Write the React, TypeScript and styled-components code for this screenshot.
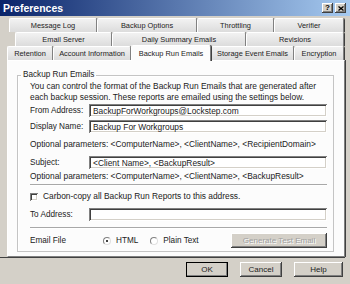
import React from "react";
import styled, { createGlobalStyle } from "styled-components";

const GlobalStyle = createGlobalStyle`
  html, body {
    margin: 0;
    padding: 0;
    background: #d4d0c8;
  }
  body {
    width: 350px;
    height: 284px;
    overflow: hidden;
    font-family: "Liberation Sans", Arial, sans-serif;
  }
`;

const raised = `
  box-shadow: inset -1px -1px #404040, inset 1px 1px #ffffff,
    inset -2px -2px #808080, inset 2px 2px #d4d0c8;
`;

const sunken = `
  box-shadow: inset 1px 1px #808080, inset -1px -1px #ffffff,
    inset 2px 2px #404040, inset -2px -2px #d4d0c8;
`;

const Window = styled.div`
  width: 350px;
  height: 284px;
  box-sizing: border-box;
  background: #d4d0c8;
  display: flex;
  flex-direction: column;
  font-family: "Liberation Sans", Arial, sans-serif;
  font-size: 8.2px;
  color: #222;
  overflow: hidden;
`;

const TitleBar = styled.div`
  height: 16px;
  flex: none;
  display: flex;
  align-items: center;
  padding: 0 4px 0 3px;
  background: linear-gradient(to right, #0a246a, #a6caf0);
`;

const Title = styled.span`
  flex: 1;
  color: #fff;
  font-weight: bold;
  font-size: 10.5px;
`;

const CaptionButton = styled.div`
  width: 11px;
  height: 10px;
  margin-left: 2px;
  background: #d4d0c8;
  ${raised}
  display: flex;
  align-items: center;
  justify-content: center;
  font-weight: bold;
  font-size: 8px;
  line-height: 10px;
  color: #000;
`;

const Sheet = styled.div`
  width: 345px;
  box-sizing: border-box;
  padding: 2px 0 0 7px;
  display: flex;
  flex-direction: column;
  border-bottom: 1px solid #404040;
`;

const TabStrip = styled.div`
  display: flex;
  flex-direction: column;
  position: relative;
  z-index: 1;
`;

const TabRow = styled.div<{ $offset: number }>`
  display: flex;
  height: 14px;
  margin-left: ${(p) => p.$offset}px;
  align-items: flex-end;
`;

const Tab = styled.div<{ $w: number; $active?: boolean }>`
  width: ${(p) => p.$w}px;
  height: ${(p) => (p.$active ? 16 : 14)}px;
  margin-bottom: ${(p) => (p.$active ? -1 : 0)}px;
  box-sizing: border-box;
  display: flex;
  align-items: center;
  justify-content: center;
  font-size: 7.4px;
  white-space: nowrap;
  border-radius: 2px 2px 0 0;
  border-top: 1px solid #fff;
  border-left: 1px solid #fff;
  border-right: 1px solid #808080;
  box-shadow: 1px 0 0 #404040;
  background: ${(p) =>
    p.$active ? "#fcfcfc" : "linear-gradient(#f2f2f2, #dcdcdc)"};
  position: relative;
  z-index: ${(p) => (p.$active ? 2 : 0)};
`;

const Panel = styled.div`
  height: 197px;
  box-sizing: border-box;
  background: #fcfcfc;
  border-left: 1px solid #fff;
  border-top: 1px solid #fff;
  border-right: 1px solid #808080;
  border-bottom: 1px solid #808080;
  box-shadow: 1px 0 0 #404040;
  padding: 0 10px 0 9px;
  display: flex;
  flex-direction: column;
`;

const GroupBox = styled.fieldset`
  margin: 9px 0 0 0;
  padding: 0 6px 3px 12px;
  border: 1px solid #c4c4c4;
  box-shadow: inset 1px 1px #fff;
  min-width: 0;
`;

const Legend = styled.legend`
  padding: 0 2px;
  margin-left: -9px;
  line-height: 10px;
`;

const Desc = styled.p`
  margin: 1px 0 0 0;
  line-height: 11px;
  font-size: 8.4px;
  white-space: nowrap;
`;

const FieldRow = styled.div<{ $gap: number }>`
  display: flex;
  align-items: center;
  margin-top: ${(p) => p.$gap}px;
`;

const Label = styled.span`
  width: 59px;
  flex: none;
  white-space: nowrap;
`;

const Field = styled.div`
  flex: 1;
  height: 13px;
  background: #fff;
  ${sunken}
  padding-left: 4px;
  display: flex;
  align-items: center;
  white-space: nowrap;
  overflow: hidden;
  font-size: 8.4px;
`;

const Note = styled.div<{ $gap: number }>`
  margin-top: ${(p) => p.$gap}px;
  line-height: 11px;
  white-space: nowrap;
  font-size: 8.4px;
`;

const Separator = styled.div<{ $gap: number }>`
  margin-top: ${(p) => p.$gap}px;
  height: 1px;
  background: #a8a8a8;
  border-bottom: 1px solid #fff;
`;

const CheckRow = styled.label`
  display: flex;
  align-items: center;
  gap: 5px;
  margin-top: 5px;
  line-height: 11px;
  font-size: 8.4px;
`;

const CheckBox = styled.span`
  width: 8px;
  height: 8px;
  background: #fff;
  ${sunken}
`;

const Radio = styled.span<{ $on?: boolean }>`
  width: 8px;
  height: 8px;
  border-radius: 50%;
  background: #fff;
  box-sizing: border-box;
  border-top: 1px solid #808080;
  border-left: 1px solid #808080;
  border-right: 1px solid #e0e0e0;
  border-bottom: 1px solid #e0e0e0;
  display: flex;
  align-items: center;
  justify-content: center;
  &::after {
    content: "";
    width: 2px;
    height: 2px;
    border-radius: 50%;
    background: ${(p) => (p.$on ? "#000" : "transparent")};
  }
`;

const RadioGroup = styled.div`
  display: flex;
  gap: 12px;
  margin-left: 14px;
`;

const RadioOption = styled.label`
  display: flex;
  align-items: center;
  gap: 5px;
`;

const Button = styled.div<{ $w: number; $default?: boolean; $disabled?: boolean }>`
  width: ${(p) => p.$w}px;
  height: 15px;
  box-sizing: border-box;
  background: #d4d0c8;
  ${raised}
  ${(p) => (p.$default ? "outline: 1px solid #000; outline-offset: -1px;" : "")}
  color: ${(p) => (p.$disabled ? "#a0a0a0" : "#222")};
  text-shadow: ${(p) => (p.$disabled ? "1px 1px 0 #fff" : "none")};
  display: flex;
  align-items: center;
  justify-content: center;
  white-space: nowrap;
  font-size: 8px;
`;

const EmailRow = styled.div`
  display: flex;
  align-items: center;
  margin-top: 4px;
  height: 15px;
`;

const Spacer = styled.div`
  flex: 1;
`;

const ButtonBar = styled.div`
  display: flex;
  justify-content: flex-end;
  gap: 12px;
  margin-top: 4px;
  padding-right: 7px;
`;

const rows = [
  {
    offset: 2,
    tabs: [
      { label: "Message Log", w: 88 },
      { label: "Backup Options", w: 100 },
      { label: "Throttling", w: 77 },
      { label: "Verifier", w: 70 },
    ],
  },
  {
    offset: 8,
    tabs: [
      { label: "Email Server", w: 97 },
      { label: "Daily Summary Emails", w: 134 },
      { label: "Revisions", w: 98 },
    ],
  },
  {
    offset: 0,
    tabs: [
      { label: "Retention", w: 46 },
      { label: "Account Information", w: 78 },
      { label: "Backup Run Emails", w: 80, active: true },
      { label: "Storage Event Emails", w: 83 },
      { label: "Encryption", w: 50 },
    ],
  },
];

export default function App() {
  return (
    <Window>
      <GlobalStyle />
      <TitleBar>
        <Title>Preferences</Title>
        <CaptionButton>?</CaptionButton>
        <CaptionButton>
          <svg width="6" height="5" viewBox="0 0 6 5">
            <path d="M0.5 0.5 L5.5 4.5 M5.5 0.5 L0.5 4.5" stroke="#000" strokeWidth="1.3" />
          </svg>
        </CaptionButton>
      </TitleBar>
      <Sheet>
        <TabStrip>
          {rows.map((row, i) => (
            <TabRow key={i} $offset={row.offset}>
              {row.tabs.map((t) => (
                <Tab key={t.label} $w={t.w} $active={(t as any).active}>
                  {t.label}
                </Tab>
              ))}
            </TabRow>
          ))}
        </TabStrip>
        <Panel>
          <GroupBox>
            <Legend>Backup Run Emails</Legend>
            <Desc>
              You can control the format of the Backup Run Emails that are generated after
              <br />
              each backup session. These reports are emailed using the settings below.
            </Desc>
            <FieldRow $gap={1}>
              <Label>From Address:</Label>
              <Field>BackupForWorkgroups@Lockstep.com</Field>
            </FieldRow>
            <FieldRow $gap={3}>
              <Label>Display Name:</Label>
              <Field>Backup For Workgroups</Field>
            </FieldRow>
            <Note $gap={6}>
              Optional parameters: &lt;ComputerName&gt;, &lt;ClientName&gt;, &lt;RecipientDomain&gt;
            </Note>
            <FieldRow $gap={6}>
              <Label>Subject:</Label>
              <Field>&lt;Client Name&gt;, &lt;BackupResult&gt;</Field>
            </FieldRow>
            <Note $gap={2}>
              Optional parameters: &lt;ComputerName&gt;, &lt;ClientName&gt;, &lt;BackupResult&gt;
            </Note>
            <Separator $gap={2} />
            <CheckRow>
              <CheckBox />
              Carbon-copy all Backup Run Reports to this address.
            </CheckRow>
            <FieldRow $gap={6}>
              <Label>To Address:</Label>
              <Field />
            </FieldRow>
            <Separator $gap={6} />
            <EmailRow>
              <Label>Email File</Label>
              <RadioGroup>
                <RadioOption>
                  <Radio $on />
                  HTML
                </RadioOption>
                <RadioOption>
                  <Radio />
                  Plain Text
                </RadioOption>
              </RadioGroup>
              <Spacer />
              <Button $w={96} $disabled>
                Generate Test Email
              </Button>
            </EmailRow>
          </GroupBox>
        </Panel>
      </Sheet>
      <ButtonBar>
        <Button $w={42} $default>
          OK
        </Button>
        <Button $w={42}>Cancel</Button>
        <Button $w={49}>Help</Button>
      </ButtonBar>
    </Window>
  );
}
